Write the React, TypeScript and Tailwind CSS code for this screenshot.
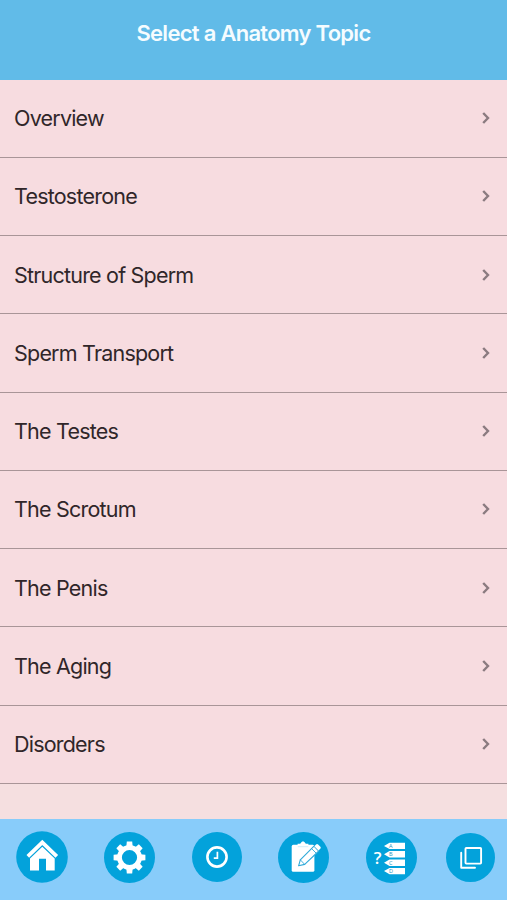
const topics = [
  "Overview",
  "Testosterone",
  "Structure of Sperm",
  "Sperm Transport",
  "The Testes",
  "The Scrotum",
  "The Penis",
  "The Aging",
  "Disorders",
];

const HomeIcon = () => (
  <svg viewBox="0 0 52 52" className="w-[52px] h-[52px]">
    <circle cx="26" cy="26" r="25.8" fill="#03a2db" />
    <path d="M11.8 25.4 26.3 11.3 40.8 25.4" fill="none" stroke="#fff" strokeWidth="3.8" />
    <path d="M26.3 15.8 38.7 27.6V39.5H30V27.7H23V39.5H14V27.6Z" fill="#fff" />
  </svg>
);

const GearIcon = () => (
  <svg viewBox="0 0 51 51" className="w-[51px] h-[51px]">
    <circle cx="25.5" cy="25.5" r="25.5" fill="#03a2db" />
    <g fill="#fff">
      {[0, 45, 90, 135, 180, 225, 270, 315].map((angle) => (
        <path key={angle} d="M22.3 15 22.8 9.6H28.2L28.7 15Z" transform={`rotate(${angle} 25.5 25.5)`} />
      ))}
    </g>
    <circle cx="25.5" cy="25.5" r="10" fill="none" stroke="#fff" strokeWidth="4.8" />
  </svg>
);

const ClockIcon = () => (
  <svg viewBox="0 0 50 50" className="w-[50px] h-[50px]">
    <circle cx="25" cy="25" r="25" fill="#03a2db" />
    <circle cx="25" cy="25" r="9.6" fill="none" stroke="#fff" strokeWidth="2.6" />
    <path d="M25.4 19.8V26.2H21.8" fill="none" stroke="#fff" strokeWidth="1.7" />
  </svg>
);

const NotesIcon = () => (
  <svg viewBox="0 0 51 51" className="w-[51px] h-[51px]">
    <circle cx="25.5" cy="25.5" r="25.5" fill="#03a2db" />
    <rect x="13.7" y="12.8" width="22.7" height="27" rx="1.6" fill="#fff" />
    <path d="M19.6 14.4V11.8H22.2Q25 6.8 27.8 11.8H30.4V14.4Z" fill="#fff" />
    <path d="M19.8 14.7H30.3" stroke="#a6dcf2" strokeWidth=".5" />
    <path
      d="M20.6 33.8 22.3 27.8 36 14.2 40.8 19 26.7 32.4Z"
      fill="#fff"
      stroke="#2fa9d9"
      strokeWidth="1.1"
      strokeLinejoin="round"
    />
    <path d="M22.3 27.8 26.7 32.4M33.6 16.6 38.4 21.4" stroke="#2fa9d9" strokeWidth=".9" />
    <path d="M36.3 14.2 38.1 12.4Q39.1 11.6 40.1 12.5L42.4 14.7Q43.2 15.6 42.4 16.6L40.6 18.4Z" fill="#fff" />
  </svg>
);

const QuizIcon = () => (
  <svg viewBox="0 0 51 51" className="w-[51px] h-[51px] font-['Open_Sans',sans-serif]">
    <circle cx="25.5" cy="25.5" r="25.5" fill="#03a2db" />
    <text x="7.8" y="32.4" fontSize="17" fontWeight="600" fill="#fff">?</text>
    {["A", "B", "C", "D"].map((letter, i) => (
      <g key={letter} transform={`translate(0 ${10.7 + i * 8.4})`}>
        <path d="M18 3.2 23.5 0H39V6.4H23.5Z" fill="#fff" />
        <text x="23" y="5.2" fontSize="5.6" fill="#2194bd">{letter}</text>
      </g>
    ))}
  </svg>
);

const CardsIcon = () => (
  <svg viewBox="0 0 49 49" className="w-[49px] h-[49px]">
    <circle cx="24.5" cy="24.5" r="24.5" fill="#03a2db" />
    <g fill="none" stroke="#fff" strokeWidth="1.9" strokeLinejoin="round" strokeLinecap="round">
      <rect x="19.5" y="15" width="15.6" height="15.6" rx=".8" />
      <path d="M15.2 19.8V34.7H29" />
    </g>
  </svg>
);

const App = () => {
  return (
    <div className="flex flex-col w-full h-[900px] overflow-hidden bg-[#f5dfe0] font-[Inter,sans-serif]">
      <header className="h-[79.5px] shrink-0 bg-[#61bbe8] pt-[18px] text-center">
        <h1 className="text-[22px] leading-[30px] font-semibold tracking-[-0.72px] text-[#f5fcff]">
          Select a Anatomy Topic
        </h1>
      </header>
      <ul className="flex-1">
        {topics.map((topic) => (
          <li
            key={topic}
            className="flex items-center justify-between h-[78.25px] pl-[14px] pr-4 bg-[#f7dce0] border-b border-[#a99598]"
          >
            <span className="text-[21.5px] tracking-[-0.79px] text-[#302629]">{topic}</span>
            <svg viewBox="0 0 10 14" className="w-[10px] h-[14px]">
              <path d="M2.2 2 7 7 2.2 12" fill="none" stroke="#8b7b80" strokeWidth="2.4" />
            </svg>
          </li>
        ))}
      </ul>
      <nav className="flex items-center gap-[36.4px] h-[81px] shrink-0 pl-4 pb-[5px] bg-[#88ccfa]">
        <HomeIcon />
        <GearIcon />
        <ClockIcon />
        <NotesIcon />
        <QuizIcon />
        <div className="-ml-[7.4px]">
          <CardsIcon />
        </div>
      </nav>
    </div>
  );
};

export default App;
